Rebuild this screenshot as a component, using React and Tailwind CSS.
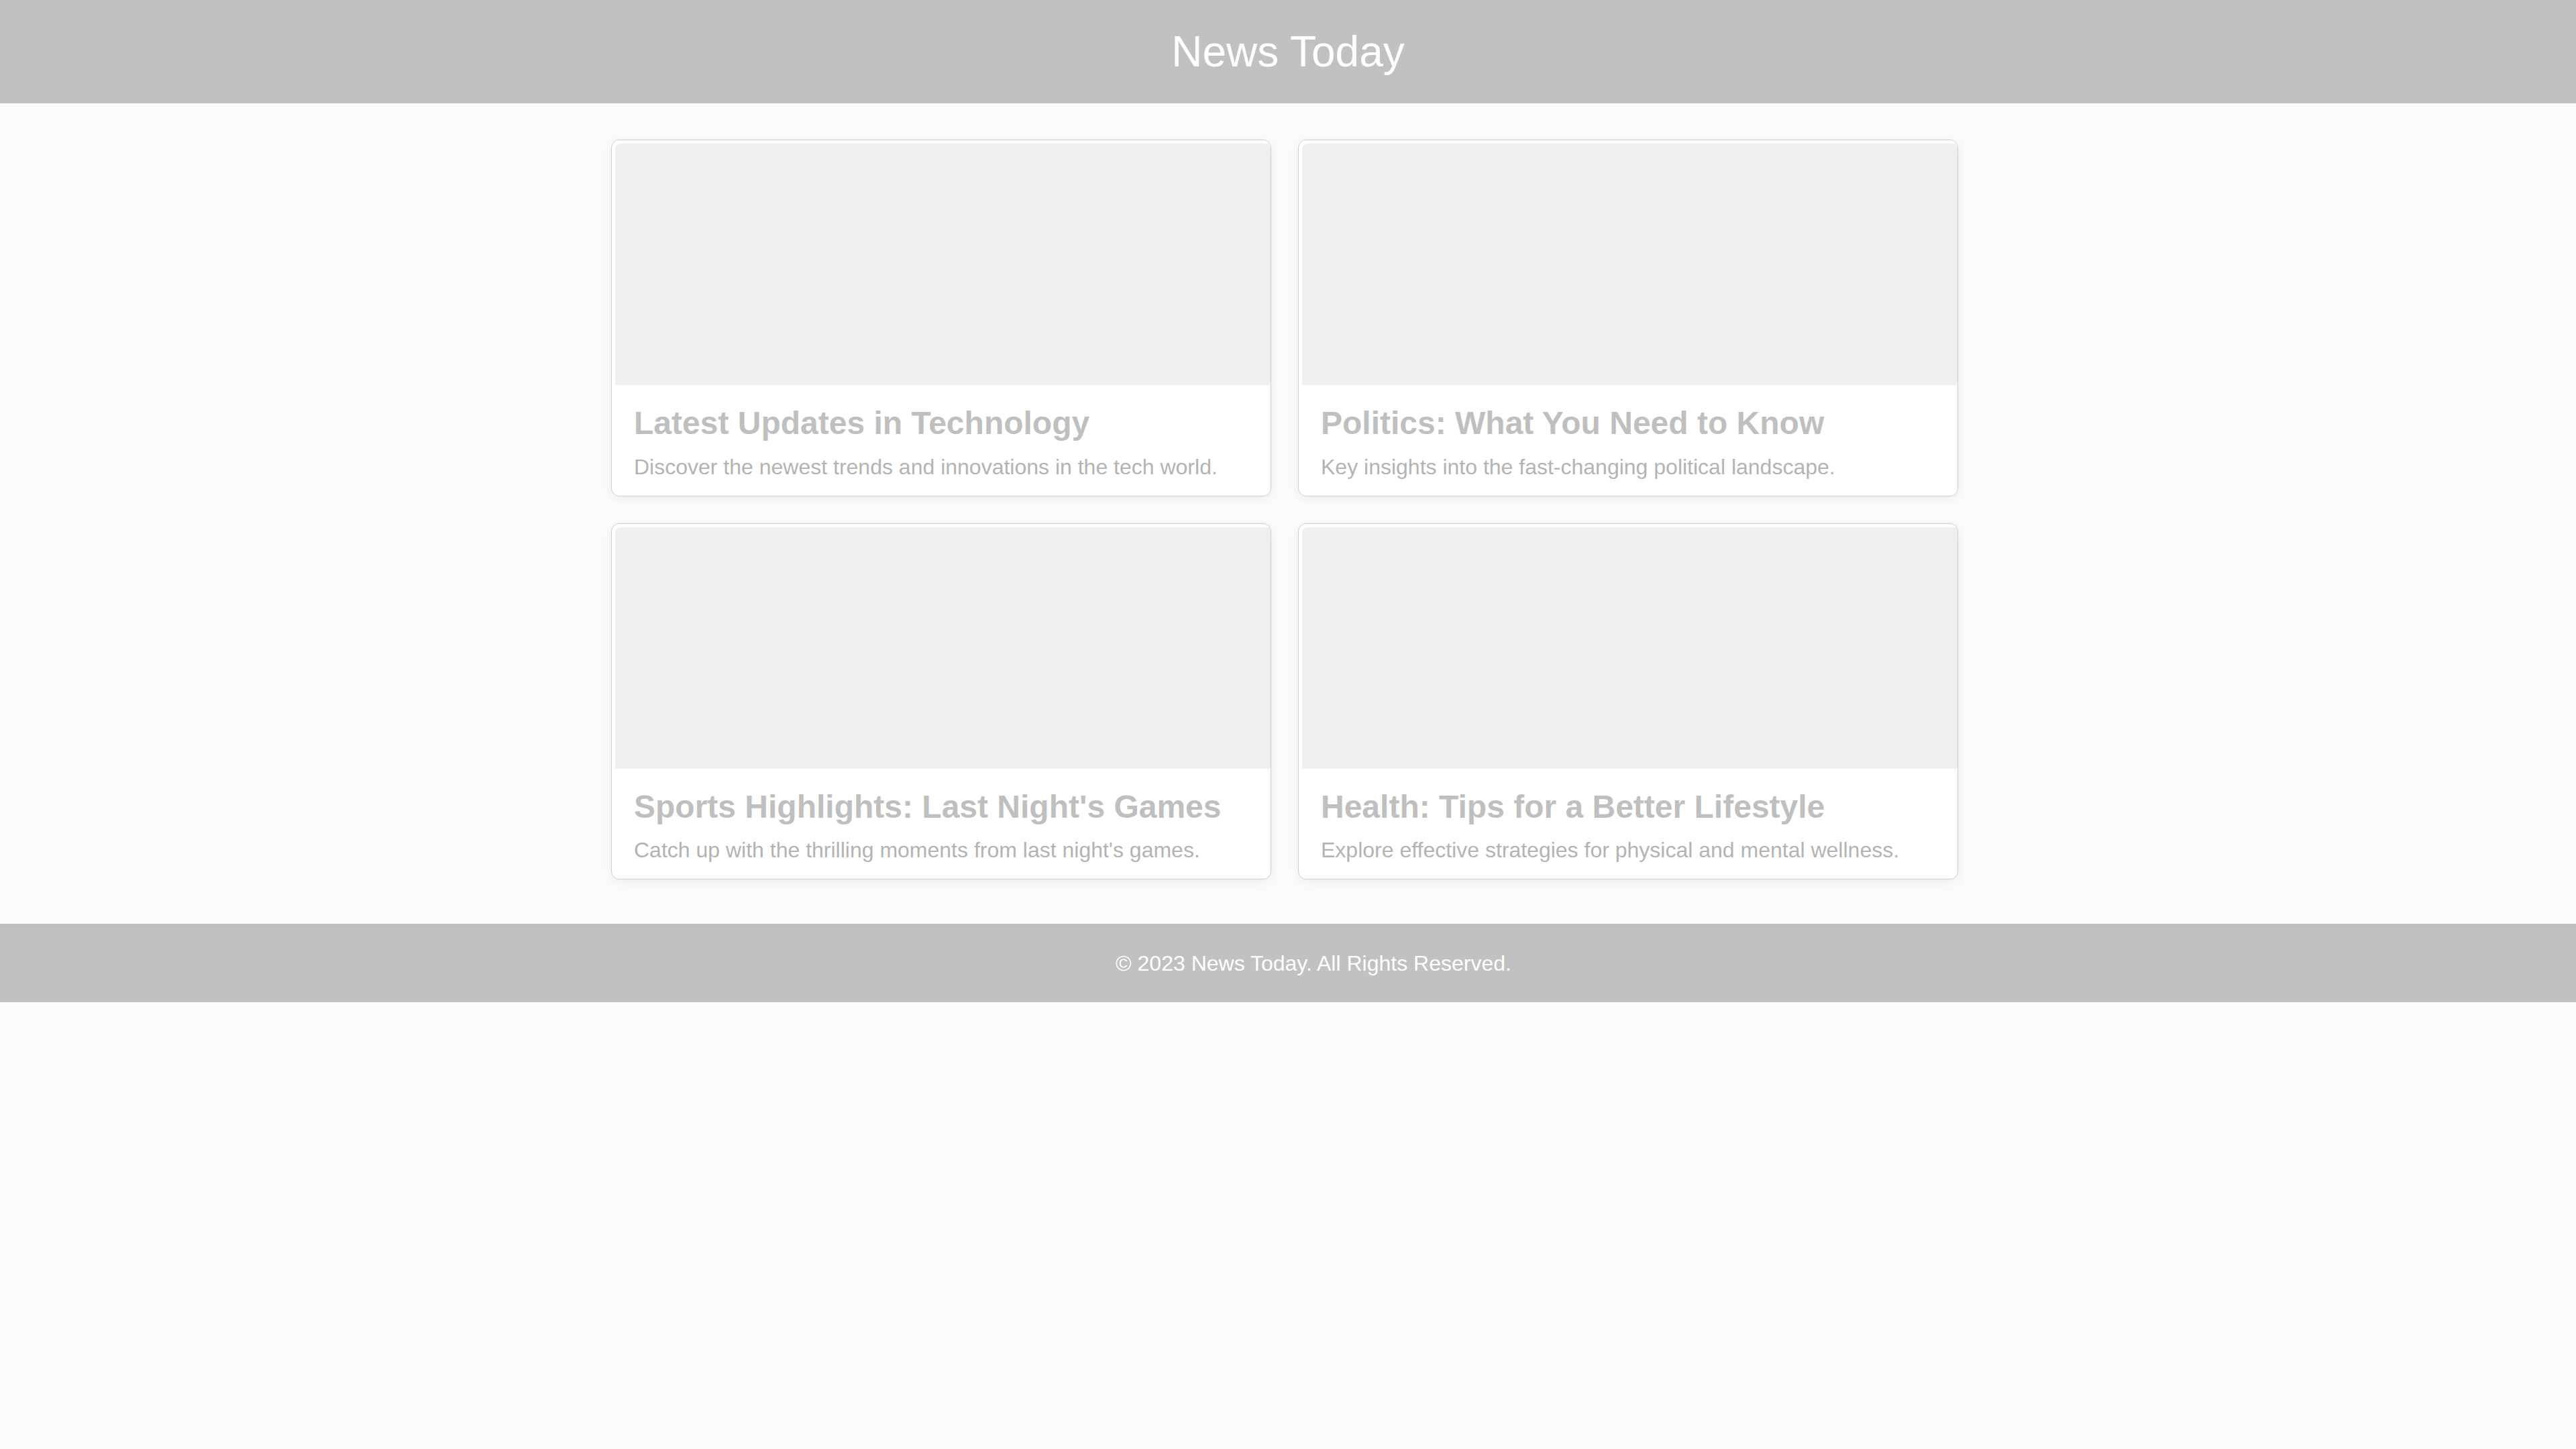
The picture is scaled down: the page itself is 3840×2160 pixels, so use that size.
import React from 'react';

const articles = [
  { id: 1, title: 'Latest Updates in Technology', summary: 'Discover the newest trends and innovations in the tech world.' },
  { id: 2, title: 'Politics: What You Need to Know', summary: 'Key insights into the fast-changing political landscape.' },
  { id: 3, title: "Sports Highlights: Last Night's Games", summary: "Catch up with the thrilling moments from last night's games." },
  { id: 4, title: 'Health: Tips for a Better Lifestyle', summary: 'Explore effective strategies for physical and mental wellness.' },
];

const ArticleCard = ({ article }) => (
  <div className="bg-white border border-[#cdcdcd] rounded-[12px] overflow-hidden shadow-[0_4px_18px_rgba(0,0,0,0.06)]">
    {/* image placeholder */}
    <div className="ml-[5px] mt-[5px] h-[360px] bg-[#efefef] rounded-tl-[8px]" />
    <div className="px-[33px] pt-[28px] pb-[19px]">
      <h2 className="text-[48px] leading-[57.6px] font-bold text-[#bfbfbf]">{article.title}</h2>
      <p className="mt-[13px] text-[32px] leading-[47px] text-[#b3b3b3]">{article.summary}</p>
    </div>
  </div>
);

const App = () => {
  return (
    <div className="min-h-screen bg-[#fbfbfb] font-['Liberation_Sans',Arial,sans-serif]">
      <header className="h-[154px] bg-[#c1c1c1] flex items-center justify-center">
        <h1 className="text-[64px] text-white leading-none">News Today</h1>
      </header>

      <main className="pt-[54px] pb-[66px] pr-[10px]">
        <div className="w-[2008px] mx-auto grid grid-cols-2 gap-x-[40px] gap-y-[40px]">
          {articles.map(a => (
            <ArticleCard key={a.id} article={a} />
          ))}
        </div>
      </main>

      <footer className="h-[117px] bg-[#c1c1c1] flex items-center justify-center pl-[76px]">
        <p className="text-[32px] text-white">© 2023 News Today. All Rights Reserved.</p>
      </footer>
    </div>
  );
};

export default App;
